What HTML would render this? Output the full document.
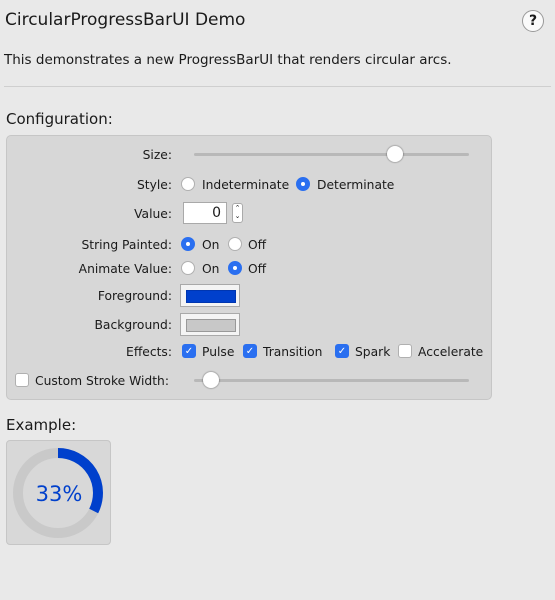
<!DOCTYPE html>
<html><head><style>
body{margin:0;width:555px;height:600px;background:#e9e9e9;font-family:"DejaVu Sans",sans-serif;color:#1a1a1a;position:relative;overflow:hidden}
.a{position:absolute;white-space:nowrap;font-size:12.3px;line-height:18px}
.r{text-align:right;width:200px}
.rad{position:absolute;width:14px;height:14px;border-radius:50%;background:#fff;border:1px solid #b0b0b0;box-sizing:border-box}
.rad.on{background:#2a6ff0;border-color:#2a6ff0}
.rad.on:after{content:"";position:absolute;left:4px;top:4px;width:4px;height:4px;border-radius:50%;background:#fff}
.cb{position:absolute;width:14px;height:14px;border-radius:3px;background:#fff;border:1px solid #b0b0b0;box-sizing:border-box}
.cb.on{background:#2a6ff0;border-color:#2a6ff0;color:#fff;font-size:10px;line-height:13px;text-align:center}
.track{position:absolute;height:3px;background:#b8b8b8;border-radius:2px}
.knob{position:absolute;width:16px;height:16px;border-radius:50%;background:#fff;box-shadow:0 0 1px 1px rgba(0,0,0,.2)}
.sw{position:absolute;width:60px;height:23px;background:#f4f4f4;border:1px solid #a9a9a9;box-sizing:border-box}
.sw div{position:absolute;left:5px;top:5px;width:48px;height:11px;border:1px solid #888}
</style></head><body>
<div class="a" style="left:5px;top:10px;font-size:17px;line-height:20px">CircularProgressBarUI Demo</div>
<div style="position:absolute;left:522px;top:10px;width:22px;height:22px;border-radius:50%;background:#fafafa;border:1px solid #999;box-sizing:border-box;text-align:center;font-size:14px;line-height:20px;font-weight:bold">?</div>
<div class="a" style="left:4px;top:51px;font-size:13.5px">This demonstrates a new ProgressBarUI that renders circular arcs.</div>
<div style="position:absolute;left:4px;right:4px;top:86px;height:1px;background:#cfcfcf"></div>
<div class="a" style="left:6px;top:110px;font-size:15px;line-height:18px">Configuration:</div>
<div style="position:absolute;left:6px;top:135px;width:486px;height:265px;background:#d7d7d7;border:1px solid #c6c6c6;border-radius:5px;box-sizing:border-box"></div>

<div class="a r" style="left:-28px;top:146px">Size:</div>
<div class="track" style="left:194px;top:153px;width:275px"></div>
<div class="knob" style="left:387px;top:146px"></div>

<div class="a r" style="left:-28px;top:176px">Style:</div>
<div class="rad" style="left:181px;top:177px"></div><div class="a" style="left:202px;top:176px">Indeterminate</div>
<div class="rad on" style="left:296px;top:177px"></div><div class="a" style="left:317px;top:176px">Determinate</div>

<div class="a r" style="left:-28px;top:205px">Value:</div>
<div style="position:absolute;left:183px;top:202px;width:44px;height:22px;background:#fff;border:1px solid #a9a9a9;box-sizing:border-box;text-align:right;padding-right:5px;font-size:14px;line-height:20px">0</div>
<div style="position:absolute;left:232px;top:203px;width:11px;height:20px;background:#fff;border:1px solid #aaa;border-radius:3px;box-sizing:border-box;font-size:7px;line-height:8px;text-align:center">⌃<br>⌄</div>

<div class="a r" style="left:-28px;top:236px">String Painted:</div>
<div class="rad on" style="left:181px;top:237px"></div><div class="a" style="left:202px;top:236px">On</div>
<div class="rad" style="left:228px;top:237px"></div><div class="a" style="left:248px;top:236px">Off</div>

<div class="a r" style="left:-28px;top:260px">Animate Value:</div>
<div class="rad" style="left:181px;top:261px"></div><div class="a" style="left:202px;top:260px">On</div>
<div class="rad on" style="left:228px;top:261px"></div><div class="a" style="left:248px;top:260px">Off</div>

<div class="a r" style="left:-28px;top:287px">Foreground:</div>
<div class="sw" style="left:180px;top:284px"><div style="background:#0040cc;border-color:#0036b0"></div></div>
<div class="a r" style="left:-28px;top:316px">Background:</div>
<div class="sw" style="left:180px;top:313px"><div style="background:#c8c8c8;border-color:#999"></div></div>

<div class="a r" style="left:-28px;top:343px">Effects:</div>
<div class="cb on" style="left:182px;top:344px">✓</div><div class="a" style="left:202px;top:343px">Pulse</div>
<div class="cb on" style="left:243px;top:344px">✓</div><div class="a" style="left:263px;top:343px">Transition</div>
<div class="cb on" style="left:335px;top:344px">✓</div><div class="a" style="left:355px;top:343px">Spark</div>
<div class="cb" style="left:398px;top:344px"></div><div class="a" style="left:418px;top:343px">Accelerate</div>

<div class="cb" style="left:15px;top:373px"></div><div class="a" style="left:35px;top:372px">Custom Stroke Width:</div>
<div class="track" style="left:194px;top:379px;width:275px"></div>
<div class="knob" style="left:203px;top:372px"></div>

<div class="a" style="left:6px;top:416px;font-size:15px;line-height:18px">Example:</div>
<div style="position:absolute;left:6px;top:440px;width:105px;height:105px;background:#d8d8d8;border:1px solid #c6c6c6;border-radius:4px;box-sizing:border-box"></div>
<svg style="position:absolute;left:0;top:0" width="555" height="600">
<circle cx="58" cy="493" r="40" fill="none" stroke="#c9c9c9" stroke-width="10"/>
<path d="M58 453 A40 40 0 0 1 93.7 511" fill="none" stroke="#0040cc" stroke-width="10"/>
<text x="59" y="501" text-anchor="middle" font-family="DejaVu Sans,sans-serif" font-size="21" fill="#0040cc">33%</text>
</svg>
</body></html>
